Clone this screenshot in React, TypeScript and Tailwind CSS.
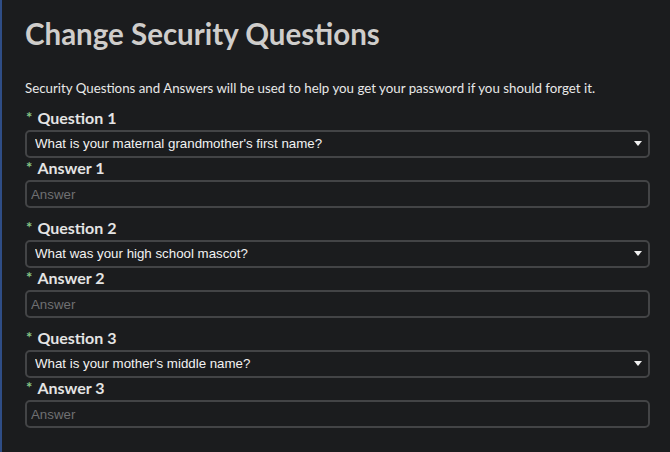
import React, { useState } from 'react';

type QuestionItem = {
  id: number;
  question: string;
};

const QUESTIONS: QuestionItem[] = [
  { id: 1, question: "What is your maternal grandmother's first name?" },
  { id: 2, question: 'What was your high school mascot?' },
  { id: 3, question: "What is your mother's middle name?" },
];

const labelFont = { fontFamily: 'Lato, "Open Sans", sans-serif' };
const inputFont = { fontFamily: '"Liberation Sans", Arial, sans-serif' };

const FieldLabel: React.FC<{ text: string }> = ({ text }) => (
  <label
    className="flex items-center h-[20px] text-[16px] font-bold text-[#e4e4e4] leading-none"
    style={labelFont}
  >
    <span className="text-[#86c786] text-[15px] ml-[1px] mr-[5px] -mt-[1px]">*</span>
    {text}
  </label>
);

const QuestionGroup: React.FC<{ item: QuestionItem }> = ({ item }) => {
  const [answer, setAnswer] = useState('');

  return (
    <div className="flex flex-col">
      <FieldLabel text={`Question ${item.id}`} />
      <div className="relative mt-[2px]">
        <select
          defaultValue={item.question}
          className="appearance-none w-full h-[28px] rounded-[5px] border-2 border-[#434446] bg-[#1b1c1e] pl-[8px] text-[13.3px] text-[#f2f2f2] outline-none"
          style={inputFont}
        >
          <option>{item.question}</option>
        </select>
        <span className="pointer-events-none absolute right-[8px] top-[11px] w-0 h-0 border-l-[4px] border-r-[4px] border-t-[5px] border-l-transparent border-r-transparent border-t-[#f0f0f0]" />
      </div>
      <FieldLabel text={`Answer ${item.id}`} />
      <input
        value={answer}
        onChange={(e) => setAnswer(e.target.value)}
        placeholder="Answer"
        className="mt-[2px] w-full h-[28px] rounded-[5px] border-2 border-[#434446] bg-[#1b1c1e] pl-[4px] text-[13.3px] text-[#f2f2f2] placeholder:text-[#6f7072] outline-none"
        style={inputFont}
      />
    </div>
  );
};

const App: React.FC = () => {
  return (
    <div className="min-h-screen w-full bg-[#1b1c1e] border-l-2 border-[#2f4d86]">
      <div className="pl-[23px] pr-[20px] pt-[14px]">
        {/* Header */}
        <h1
          className="text-[29.5px] font-bold text-[#cfcdcb] leading-[40px]"
          style={labelFont}
        >
          Change Security Questions
        </h1>
        <p
          className="mt-[25px] text-[13.3px] text-[#e8e8e8] leading-[18px]"
          style={labelFont}
        >
          Security Questions and Answers will be used to help you get your password if you should forget it.
        </p>

        {/* Questions */}
        <div className="mt-[11px] flex flex-col gap-[10px]">
          {QUESTIONS.map((q) => (
            <QuestionGroup key={q.id} item={q} />
          ))}
        </div>
      </div>
    </div>
  );
};

export default App;
